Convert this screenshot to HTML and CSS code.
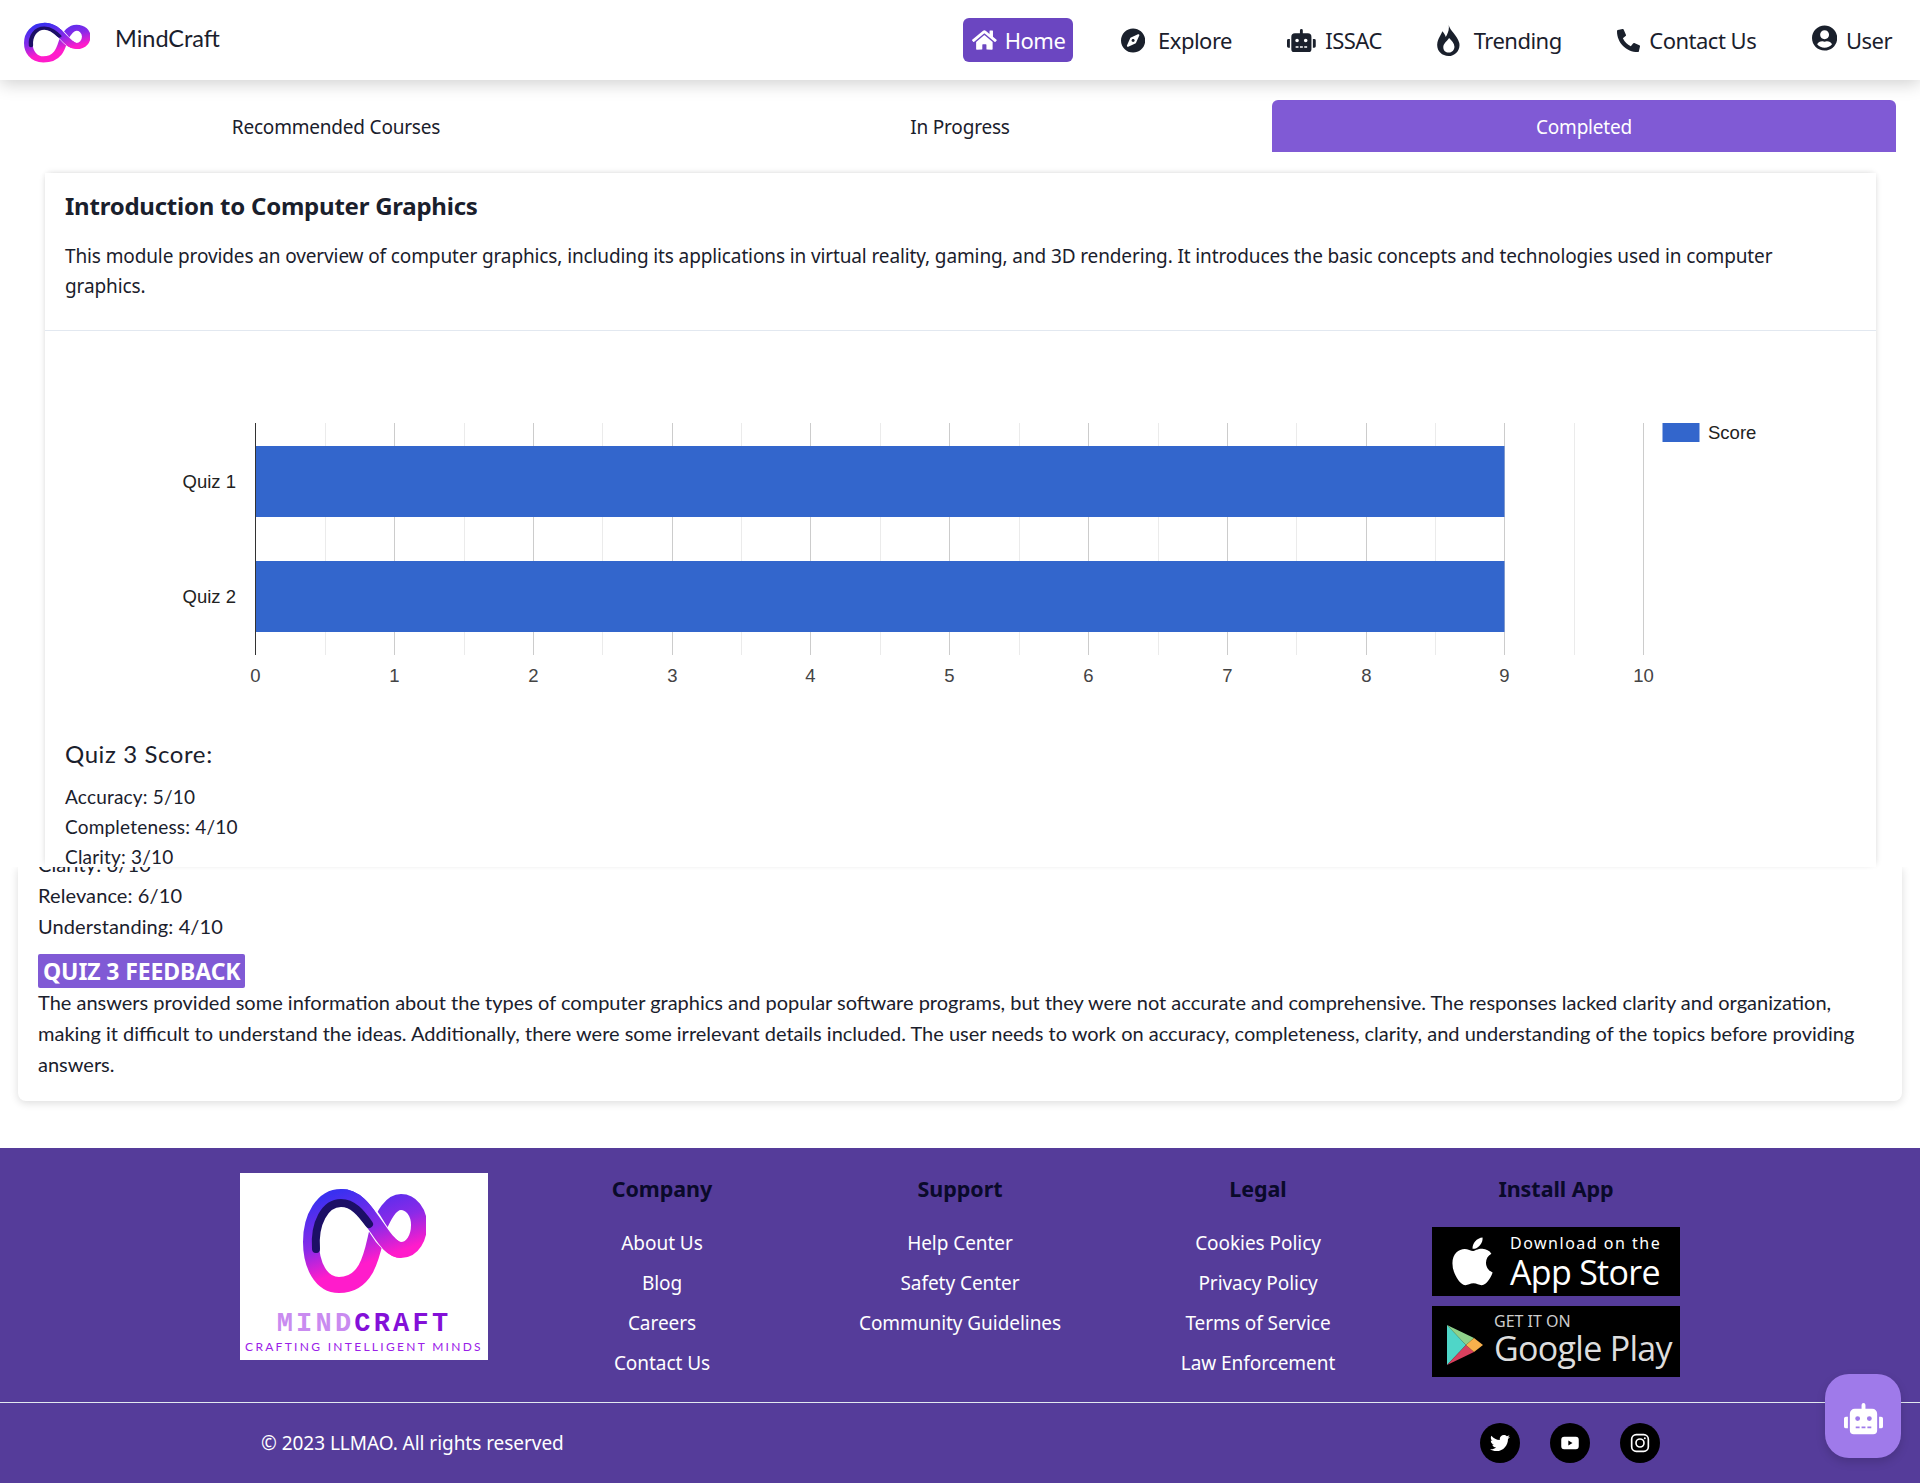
FILE: index.html
```html
<!DOCTYPE html>
<html lang="en">
<head>
  <meta charset="UTF-8" />
  <meta name="viewport" content="width=device-width, initial-scale=1.0" />
  <title>MindCraft</title>
  <link rel="stylesheet" href="styles.css">
</head>
<body>
  <svg class="defs" width="0" height="0" aria-hidden="true">
    <defs>
      <linearGradient id="lowGrad" gradientUnits="userSpaceOnUse" x1="20" y1="10" x2="50" y2="95">
        <stop offset="0" stop-color="#3a30f0" />
        <stop offset="0.5" stop-color="#8a2ae8" />
        <stop offset="0.85" stop-color="#ff1ccb" />
      </linearGradient>
      <symbol id="loop" viewBox="0 0 123 110" preserveAspectRatio="none">
        <path d="M38 10C55 10 64 27 75 42C83 54 90 63 98 63C110 63 116 50 116 38C116 25 108 15 98 15C88 15 81 28 75 42C70 58 68 98 36 98C18 98 8 78 8 55C8 30 20 10 38 10Z" fill="none" stroke="url(#lowGrad)" stroke-width="16" />
        <path d="M66 28C70 33 72 37 75 42C78 47 81 51 85 55" fill="none" stroke="#fff" stroke-width="18" />
        <path d="M38 10C55 10 64 27 75 42C83 54 90 63 98 63" fill="none" stroke="url(#lowGrad)" stroke-width="16" />
        <path d="M13 62C11 36 22 16 38 16C50 16 58 26 66 37" fill="none" stroke="#1c0f66" stroke-width="8" stroke-linecap="round" />
      </symbol>
    </defs>
  </svg>

  <header class="navbar">
    <div class="brand">
      <svg class="brand-logo"><use href="#loop" /></svg>
      <span class="brand-name">MindCraft</span>
    </div>
    <nav class="nav-links">
      <a class="nav-item active" href="#">
        <svg class="ic" viewBox="0 0 576 512"><path d="M280.37 148.26L96 300.11V464a16 16 0 0 0 16 16l112.06-.29a16 16 0 0 0 15.92-16V368a16 16 0 0 1 16-16h64a16 16 0 0 1 16 16v95.64a16 16 0 0 0 16 16.05L464 480a16 16 0 0 0 16-16V300L295.67 148.26a12.19 12.19 0 0 0-15.3 0zM571.6 251.47L488 182.56V44.05a12 12 0 0 0-12-12h-56a12 12 0 0 0-12 12v72.61L318.47 43a48 48 0 0 0-61 0L4.34 251.47a12 12 0 0 0-1.6 16.9l25.5 31A12 12 0 0 0 45.15 301l235.22-193.74a12.19 12.19 0 0 1 15.3 0L530.9 301a12 12 0 0 0 16.9-1.6l25.5-31a12 12 0 0 0-1.7-16.93z"/></svg>
        Home
      </a>
      <a class="nav-item" href="#">
        <svg class="ic" viewBox="0 0 496 512"><path d="M225.38 233.37c-12.5 12.5-12.5 32.76 0 45.25 12.49 12.5 32.76 12.5 45.25 0 12.5-12.5 12.5-32.76 0-45.25-12.5-12.49-32.76-12.49-45.25 0zM248 8C111.03 8 0 119.03 0 256s111.03 248 248 248 248-111.03 248-248S384.97 8 248 8zm126.14 148.05L308.17 300.4a31.938 31.938 0 0 1-15.77 15.77l-144.34 65.97c-16.65 7.61-33.81-9.55-26.2-26.2l65.98-144.35a31.938 31.938 0 0 1 15.77-15.77l144.34-65.97c16.65-7.6 33.8 9.55 26.19 26.2z"/></svg>
        Explore
      </a>
      <a class="nav-item tight" href="#">
        <svg class="ic ic-robot" viewBox="0 0 640 512"><path d="M32,224H64V416H32A31.96166,31.96166,0,0,1,0,384V256A31.96166,31.96166,0,0,1,32,224Zm512-48V448a64.06328,64.06328,0,0,1-64,64H160a64.06328,64.06328,0,0,1-64-64V176a79.974,79.974,0,0,1,80-80H288V32a32,32,0,0,1,64,0V96H464A79.974,79.974,0,0,1,544,176ZM264,256a40,40,0,1,0-40,40A39.997,39.997,0,0,0,264,256Zm-8,128H192v32h64Zm96,0H288v32h64ZM456,256a40,40,0,1,0-40,40A39.997,39.997,0,0,0,456,256Zm-8,128H384v32h64ZM640,256V384a31.96166,31.96166,0,0,1-32,32H576V224h32A31.96166,31.96166,0,0,1,640,256Z"/></svg>
        ISSAC
      </a>
      <a class="nav-item" href="#">
        <svg class="ic ic-fire" viewBox="0 0 24 32"><path fill-rule="evenodd" d="M12 0C13.500 6 21 10.500 23 18.500C24.500 26 18.500 32 12 32C5 32 -.2 27 .2 20C.7 14 4 11 5.500 6.500C7.500 8.500 8.500 10.500 9 12.500C11 9 13 5 12 0ZM12 28.500C15.500 28.500 18 26 18 22.500C18 19 15 16 12.500 13.500C10 17 6.500 19.500 6.500 23C6.500 26.500 9 28.500 12 28.500Z"/></svg>
        Trending
      </a>
      <a class="nav-item tight" href="#">
        <svg class="ic ic-phone" viewBox="0 0 512 512"><path d="M497.39 361.8l-112-48a24 24 0 0 0-28 6.9l-49.6 60.6A370.66 370.66 0 0 1 130.6 204.11l60.6-49.6a23.94 23.94 0 0 0 6.9-28l-48-112A24.16 24.16 0 0 0 122.6.61l-104 24A24 24 0 0 0 0 48c0 256.5 207.9 464 464 464a24 24 0 0 0 23.4-18.6l24-104a24.29 24.29 0 0 0-14.01-27.6z"/></svg>
        Contact Us
      </a>
      <a class="nav-item tight" href="#">
        <svg class="ic ic-user" viewBox="0 0 496 512"><path d="M248 8C111 8 0 119 0 256s111 248 248 248 248-111 248-248S385 8 248 8zm0 96c48.6 0 88 39.4 88 88s-39.4 88-88 88-88-39.4-88-88 39.4-88 88-88zm0 344c-58.7 0-111.3-26.6-146.5-68.2 18.8-35.4 55.6-59.8 98.5-59.8 2.4 0 4.8.4 7.1 1.1 13 4.2 26.6 6.9 40.9 6.9 14.3 0 28-2.7 40.9-6.9 2.3-.7 4.7-1.1 7.1-1.1 42.9 0 79.7 24.4 98.5 59.8C359.3 421.4 306.7 448 248 448z"/></svg>
        User
      </a>
    </nav>
  </header>

  <main>
    <div class="tabs">
      <button class="tab">Recommended Courses</button>
      <button class="tab">In Progress</button>
      <button class="tab selected">Completed</button>
    </div>

    <section class="module-card">
      <div class="module-head">
        <h2>Introduction to Computer Graphics</h2>
        <p>This module provides an overview of computer graphics, including its applications in virtual reality, gaming, and 3D rendering. It introduces the basic concepts and technologies used in computer graphics.</p>
      </div>

      <svg class="chart" viewBox="0 0 1832 370" width="1832" height="370">
        <g class="grid-minor">
          <path d="M280.5 92V324M419.5 92V324M557.5 92V324M696.5 92V324M835.5 92V324M974.5 92V324M1113.5 92V324M1251.5 92V324M1390.5 92V324M1529.5 92V324" />
        </g>
        <g class="grid-major">
          <path d="M349.5 92V324M488.5 92V324M627.5 92V324M765.5 92V324M904.5 92V324M1043.5 92V324M1182.5 92V324M1321.5 92V324M1459.5 92V324M1598.5 92V324" />
        </g>
        <rect class="bar" x="210.5" y="115" width="1249" height="71" />
        <rect class="bar" x="210.5" y="230" width="1249" height="71" />
        <path class="axis" d="M210.5 92V324" />
        <text class="row-label" x="191" y="157">Quiz 1</text>
        <text class="row-label" x="191" y="272">Quiz 2</text>
        <g class="ticks">
          <text x="210.5" y="351">0</text>
          <text x="349.5" y="351">1</text>
          <text x="488.5" y="351">2</text>
          <text x="627.5" y="351">3</text>
          <text x="765.5" y="351">4</text>
          <text x="904.5" y="351">5</text>
          <text x="1043.5" y="351">6</text>
          <text x="1182.5" y="351">7</text>
          <text x="1321.5" y="351">8</text>
          <text x="1459.5" y="351">9</text>
          <text x="1598.5" y="351">10</text>
        </g>
        <rect class="bar" x="1617.5" y="92" width="37" height="19" />
        <text class="legend" x="1663" y="108">Score</text>
      </svg>

      <div class="quiz-score">
        <h3>Quiz 3 Score:</h3>
        <p>Accuracy: 5/10</p>
        <p>Completeness: 4/10</p>
        <p>Clarity: 3/10</p>
      </div>
    </section>

    <section class="feedback-card">
      <p class="cut-line">Clarity: 6/10</p>
      <p>Relevance: 6/10</p>
      <p>Understanding: 4/10</p>
      <span class="feedback-tag">QUIZ 3 FEEDBACK</span>
      <p class="feedback-text">The answers provided some information about the types of computer graphics and popular software programs, but they were not accurate and comprehensive. The responses lacked clarity and organization, making it difficult to understand the ideas. Additionally, there were some irrelevant details included. The user needs to work on accuracy, completeness, clarity, and understanding of the topics before providing answers.</p>
    </section>
  </main>

  <footer class="site-footer">
    <div class="footer-top">
      <div class="footer-col">
        <div class="footer-logo">
          <svg class="footer-loop"><use href="#loop" /></svg>
          <div class="logo-word"><span class="light">MIND</span><span class="deep">CRAFT</span></div>
          <div class="logo-tag">CRAFTING INTELLIGENT MINDS</div>
        </div>
      </div>
      <div class="footer-col">
        <h4>Company</h4>
        <a href="#">About Us</a>
        <a href="#">Blog</a>
        <a href="#">Careers</a>
        <a href="#">Contact Us</a>
      </div>
      <div class="footer-col">
        <h4>Support</h4>
        <a href="#">Help Center</a>
        <a href="#">Safety Center</a>
        <a href="#">Community Guidelines</a>
      </div>
      <div class="footer-col">
        <h4>Legal</h4>
        <a href="#">Cookies Policy</a>
        <a href="#">Privacy Policy</a>
        <a href="#">Terms of Service</a>
        <a href="#">Law Enforcement</a>
      </div>
      <div class="footer-col">
        <h4>Install App</h4>
        <div class="store-badge apple">
          <svg viewBox="0 0 384 512"><path d="M318.7 268.7c-.2-36.7 16.4-64.4 50-84.8-18.8-26.9-47.2-41.7-84.7-44.6-35.5-2.8-74.3 20.7-88.5 20.7-15 0-49.4-19.7-76.4-19.7C63.3 141.2 4 184.8 4 273.5q0 39.3 14.4 81.2c12.8 36.7 59 126.7 107.2 125.2 25.2-.6 43-17.9 75.8-17.9 31.8 0 48.3 17.9 76.4 17.9 48.6-.7 90.4-82.5 102.6-119.3-65.2-30.7-61.7-90-61.7-91.9zm-56.6-164.2c27.3-32.4 24.8-61.9 24-72.5-24.1 1.4-52 16.4-67.9 34.9-17.5 19.8-27.8 44.3-25.6 71.9 26.1 2 49.9-11.4 69.5-34.3z"/></svg>
          <div class="badge-text">
            <small>Download on the</small>
            <strong>App Store</strong>
          </div>
        </div>
        <div class="store-badge play">
          <svg viewBox="0 0 38 42">
            <polygon points="1,1 1,41 20,21" fill="#4fd6c8" />
            <polygon points="1,1 20,21 28,14" fill="#8fd18a" />
            <polygon points="1,41 20,21 28,28" fill="#d8405e" />
            <polygon points="28,14 20,21 28,28 37,21" fill="#f8b04c" />
          </svg>
          <div class="badge-text">
            <small>GET IT ON</small>
            <strong>Google Play</strong>
          </div>
        </div>
      </div>
    </div>
    <div class="footer-bottom">
      <p>&copy; 2023 LLMAO. All rights reserved</p>
      <div class="socials">
        <a class="social" href="#"><svg viewBox="0 0 512 512"><path d="M459.37 151.716c.325 4.548.325 9.097.325 13.645 0 138.72-105.583 298.558-298.558 298.558-59.452 0-114.68-17.219-161.137-47.106 8.447.974 16.568 1.299 25.34 1.299 49.055 0 94.213-16.568 130.274-44.832-46.132-.975-84.792-31.188-98.112-72.772 6.498.974 12.995 1.624 19.818 1.624 9.421 0 18.843-1.3 27.614-3.573-48.081-9.747-84.143-51.98-84.143-102.985v-1.299c13.969 7.797 30.214 12.67 47.431 13.319-28.264-18.843-46.781-51.005-46.781-87.391 0-19.492 5.197-37.36 14.294-52.954 51.655 63.675 129.3 105.258 216.365 109.807-1.624-7.797-2.599-15.918-2.599-24.04 0-57.828 46.782-104.934 104.934-104.934 30.213 0 57.502 12.67 76.67 33.137 23.715-4.548 46.456-13.32 66.599-25.34-7.798 24.366-24.366 44.833-46.132 57.827 21.117-2.273 41.584-8.122 60.426-16.243-14.292 20.791-32.161 39.308-52.628 54.253z"/></svg></a>
        <a class="social" href="#"><svg viewBox="0 0 24 24"><path fill-rule="evenodd" d="M5 4.5h14a3.5 3.5 0 0 1 3.5 3.5v8a3.5 3.5 0 0 1-3.5 3.5H5A3.5 3.5 0 0 1 1.500 16V8A3.500 3.500 0 0 1 5 4.500zM10 9v6l5-3z"/></svg></a>
        <a class="social" href="#"><svg class="insta" viewBox="0 0 24 24"><rect x="2" y="2" width="20" height="20" rx="5.500" /><circle cx="12" cy="12" r="4.800" /><circle class="dot" cx="17.800" cy="6.200" r="1.200" /></svg></a>
      </div>
    </div>
    <button class="bot-btn" aria-label="Chat">
      <svg viewBox="0 0 640 512"><path d="M32,224H64V416H32A31.96166,31.96166,0,0,1,0,384V256A31.96166,31.96166,0,0,1,32,224Zm512-48V448a64.06328,64.06328,0,0,1-64,64H160a64.06328,64.06328,0,0,1-64-64V176a79.974,79.974,0,0,1,80-80H288V32a32,32,0,0,1,64,0V96H464A79.974,79.974,0,0,1,544,176ZM264,256a40,40,0,1,0-40,40A39.997,39.997,0,0,0,264,256Zm-8,128H192v32h64Zm96,0H288v32h64ZM456,256a40,40,0,1,0-40,40A39.997,39.997,0,0,0,456,256Zm-8,128H384v32h64ZM640,256V384a31.96166,31.96166,0,0,1-32,32H576V224h32A31.96166,31.96166,0,0,1,640,256Z"/></svg>
    </button>
  </footer>
</body>
</html>
```

FILE: styles.css
```css
* {
  box-sizing: border-box;
}
body {
  margin: 0;
  background: #fff;
  color: #1a202c;
  font-family: "Noto Sans", "Open Sans", sans-serif;
}
p, h2, h3, h4 {
  margin: 0;
}
a {
  color: inherit;
  text-decoration: none;
}
.defs {
  position: absolute;
}

/* navbar */
.navbar {
  height: 80px;
  display: flex;
  align-items: center;
  justify-content: space-between;
  padding: 0 20px 0 24px;
  background: #fff;
  box-shadow: 0 4px 16px rgba(0,0,0,0.18);
  position: relative;
  z-index: 5;
}
.brand {
  display: flex;
  align-items: center;
  gap: 25px;
}
.brand-logo {
  width: 66px;
  height: 42px;
  margin-top: 5px;
}
.brand-name {
  font-family: Lato, sans-serif;
  font-size: 23.5px;
  margin-top: -5px;
}
.nav-links {
  display: flex;
  align-items: center;
  gap: 37.5px;
}
.nav-item {
  height: 44px;
  display: flex;
  align-items: center;
  gap: 13px;
  padding: 0 8px 0 10px;
  font-size: 22px;
  letter-spacing: -0.5px;
  border-radius: 6px;
}
.nav-item.tight {
  gap: 9px;
}
.nav-item.active {
  background: #6b46c1;
  color: #fff;
  gap: 8px;
  padding-left: 9px;
}
.ic {
  height: 25px;
  width: auto;
  fill: #1a202c;
}
.active .ic {
  fill: #fff;
  height: 22px;
}
.ic-robot {
  height: 23px;
}
.ic-fire {
  height: 31px;
}
.ic-phone {
  height: 23px;
}
.ic-user {
  height: 26px;
  margin-top: -4px;
}

/* tabs */
.tabs {
  display: grid;
  grid-template-columns: repeat(3, 1fr);
  margin: 20px 24px 0;
}
.tab {
  height: 52px;
  padding: 2px 0 0;
  border: 0;
  background: none;
  font-family: inherit;
  font-size: 19px;
  letter-spacing: -0.2px;
  color: #1a202c;
  border-radius: 6px 6px 0 0;
}
.tab.selected {
  background: #805ad5;
  color: #fff;
}

/* first card, its quiz text runs over the lower card */
.module-card {
  height: 694px;
  margin: 21px 44px 0 45px;
  background: #fff;
  box-shadow: 0 -3px 6px -2px rgba(0,0,0,0.08), -3px 0 6px -3px rgba(0,0,0,0.12), 3px 0 6px -3px rgba(0,0,0,0.12);
  position: relative;
  z-index: 2;
}
.module-head {
  height: 158px;
  padding: 17px 20px 0;
  border-bottom: 1px solid #e2e8f0;
}
.module-head h2 {
  font-size: 24px;
  font-weight: 700;
  letter-spacing: -0.24px;
  line-height: 32px;
}
.module-head p {
  margin-top: 19px;
  font-size: 19px;
  letter-spacing: -0.12px;
  line-height: 30px;
}
.chart {
  display: block;
}
.grid-minor path {
  stroke: #ebebeb;
  stroke-width: 1;
}
.grid-major path {
  stroke: #ccc;
  stroke-width: 1;
}
.axis {
  stroke: #333;
  stroke-width: 1;
}
.bar {
  fill: #3366cc;
}
.chart text {
  font-family: "Liberation Sans", Arial, sans-serif;
  font-size: 18.5px;
  fill: #222;
}
.row-label {
  text-anchor: end;
}
.chart .ticks text {
  text-anchor: middle;
  fill: #444;
}
.quiz-score {
  margin-top: 35px;
  padding: 0 20px;
  font-family: Lato, sans-serif;
  font-size: 19px;
  line-height: 30px;
  letter-spacing: 0.2px;
}
.quiz-score h3 {
  font-size: 24px;
  font-weight: 400;
  line-height: 36px;
  margin-bottom: 10px;
  letter-spacing: 0.6px;
}

/* lower card */
.feedback-card {
  margin: 0 18px 0;
  height: 234px;
  padding: 0 20px;
  overflow: hidden;
  background: #fff;
  border-radius: 0 0 8px 8px;
  box-shadow: 0 2px 8px rgba(0,0,0,0.14);
  clip-path: inset(0 -12px -12px -12px);
  font-family: Lato, sans-serif;
  font-size: 20px;
  line-height: 31px;
  letter-spacing: 0.1px;
}
.cut-line {
  margin-top: -18px;
}
.feedback-tag {
  display: inline-block;
  margin-top: 12px;
  padding: 0 5px;
  height: 34px;
  line-height: 34px;
  background: #805ad5;
  color: #fff;
  border-radius: 2px;
  font-family: "Noto Sans", sans-serif;
  font-size: 23px;
  font-weight: 700;
  letter-spacing: -0.1px;
}
.feedback-text {
  margin-top: -1px;
  letter-spacing: 0;
}

/* footer */
.site-footer {
  margin-top: 47px;
  height: 335px;
  background: #553c9a;
  color: #fff;
  position: relative;
}
.footer-top {
  height: 255px;
  display: grid;
  grid-template-columns: repeat(5, 298px);
  justify-content: center;
  border-bottom: 1px solid #e2e8f0;
}
.footer-col {
  display: flex;
  flex-direction: column;
  align-items: center;
  padding-top: 26px;
  font-size: 19px;
  letter-spacing: -0.05px;
}
.footer-col h4 {
  color: #0a0a2a;
  font-size: 21.5px;
  font-weight: 700;
  line-height: 30px;
  margin-bottom: 19px;
}
.footer-col a {
  line-height: 40px;
}
.footer-logo {
  width: 248px;
  height: 187px;
  margin-top: -1px;
  background: #fff;
  display: flex;
  flex-direction: column;
  align-items: center;
  text-align: center;
}
.footer-loop {
  width: 123px;
  height: 110px;
  margin-top: 14px;
}
.logo-word {
  font-family: "Liberation Mono", monospace;
  font-weight: 700;
  font-size: 27px;
  line-height: 26px;
  letter-spacing: 3.2px;
  margin-top: 14px;
}
.light {
  color: #c98bf0;
}
.deep {
  color: #8310d8;
}
.logo-tag {
  font-family: Lato, sans-serif;
  font-size: 12px;
  letter-spacing: 2.3px;
  line-height: 16px;
  margin-top: 2px;
  color: #9a20e8;
  white-space: nowrap;
}
.store-badge {
  width: 248px;
  background: #000;
  display: flex;
  align-items: center;
  color: #fff;
}
.store-badge.apple {
  height: 69px;
  margin-top: 4px;
  padding-left: 20px;
  gap: 17px;
}
.store-badge.play {
  height: 71px;
  margin-top: 10px;
  padding-left: 14px;
  gap: 10px;
}
.apple svg {
  width: 41px;
  fill: #fff;
}
.play svg {
  width: 38px;
  height: 42px;
  margin-top: 6px;
}
.badge-text {
  display: flex;
  flex-direction: column;
}
.badge-text small {
  font-size: 16px;
  line-height: 20px;
  letter-spacing: 1.5px;
}
.badge-text strong {
  font-family: "Open Sans", sans-serif;
  font-weight: 500;
  font-size: 34px;
  line-height: 38px;
  letter-spacing: -0.7px;
}
.play .badge-text {
  margin-top: -5px;
}
.play .badge-text small {
  color: #ccc;
  letter-spacing: 0;
}
.play .badge-text strong {
  color: #ddd;
  margin-top: -2px;
}
.footer-bottom {
  height: 80px;
  display: flex;
  align-items: center;
  justify-content: space-between;
  padding: 0 260px 0 261px;
  font-size: 19px;
  letter-spacing: -0.04px;
}
.socials {
  display: flex;
  gap: 30px;
}
.social {
  width: 40px;
  height: 40px;
  border-radius: 50%;
  background: #000;
  display: flex;
  align-items: center;
  justify-content: center;
}
.social svg {
  width: 20px;
  height: 20px;
  fill: #fff;
}
.social .insta {
  fill: none;
  stroke: #fff;
  stroke-width: 2;
}
.insta .dot {
  fill: #fff;
  stroke: none;
}
.bot-btn {
  position: absolute;
  right: 19px;
  top: 226px;
  width: 76px;
  height: 84px;
  border: 0;
  border-radius: 24px;
  background: #9f7aea;
  box-shadow: 0 4px 10px rgba(0,0,0,0.15);
  display: flex;
  align-items: center;
  justify-content: center;
}
.bot-btn svg {
  width: 39px;
  fill: #fff;
  margin-top: 6px;
}
```
